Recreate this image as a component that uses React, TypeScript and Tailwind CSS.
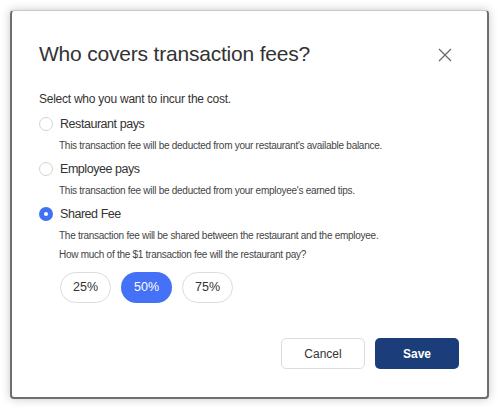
import { useState } from "react";

const options = [
  {
    id: "restaurant",
    label: "Restaurant pays",
    description: "This transaction fee will be deducted from your restaurant's available balance.",
  },
  {
    id: "employee",
    label: "Employee pays",
    description: "This transaction fee will be deducted from your employee's earned tips.",
  },
  {
    id: "shared",
    label: "Shared Fee",
    description: "The transaction fee will be shared between the restaurant and the employee.",
  },
];

const shares = ["25%", "50%", "75%"];

const Radio = ({ checked }: { checked: boolean }) =>
  checked ? (
    <span className="w-[14px] h-[14px] rounded-full bg-[#3f72f2] flex items-center justify-center shrink-0">
      <span className="w-[4px] h-[4px] rounded-full bg-white" />
    </span>
  ) : (
    <span className="w-[14px] h-[14px] rounded-full border border-[#d4d4d4] bg-white shrink-0" />
  );

const App = () => {
  const [selected, setSelected] = useState("shared");
  const [share, setShare] = useState("50%");

  return (
    <div
      className="w-[500px] h-[410px] bg-white pt-[10px] pl-[10px]"
      style={{ fontFamily: '"Liberation Sans", Arial, sans-serif' }}
    >
      <div className="w-[479px] h-[389px] bg-white rounded-[4px] border-t border-t-[#c8c8c8] border-x-2 border-b-2 border-x-[#6e6e6e] border-b-[#6e6e6e] shadow-[0_0_10px_rgba(0,0,0,0.22)] flex flex-col pl-[27px] pr-[27px] pt-[31px]">
        <div className="flex items-start justify-between">
          <h1 className="text-[21px] leading-[24px] tracking-[-0.2px] text-[#333]">Who covers transaction fees?</h1>
          <button className="mt-[6px] mr-[8px] text-[#666]" aria-label="Close">
            <svg width="14" height="14" viewBox="0 0 14 14" fill="none" stroke="currentColor" strokeWidth="1.2">
              <path d="M1 1L13 13M13 1L1 13" />
            </svg>
          </button>
        </div>

        <p className="mt-[25px] text-[12px] leading-[16px] tracking-[-0.25px] text-[#333]">
          Select who you want to incur the cost.
        </p>

        <div className="mt-[7px] flex flex-col gap-[5px]">
          {options.map((o) => (
            <div key={o.id} className="flex flex-col gap-[4px]">
              <label className="flex items-center gap-[7px] h-[20px] cursor-pointer" onClick={() => setSelected(o.id)}>
                <Radio checked={selected === o.id} />
                <span className="text-[12.5px] tracking-[-0.45px] text-[#333]">{o.label}</span>
              </label>
              <p className="pl-[20px] text-[10px] leading-[16px] tracking-[-0.27px] text-[#444]">{o.description}</p>
            </div>
          ))}
        </div>

        <p className="mt-[3px] pl-[20px] text-[10px] leading-[16px] tracking-[-0.27px] text-[#444]">
          How much of the $1 transaction fee will the restaurant pay?
        </p>

        <div className="mt-[9px] pl-[21px] flex gap-[10px]">
          {shares.map((s) => (
            <button
              key={s}
              onClick={() => setShare(s)}
              className={
                share === s
                  ? "w-[51px] h-[31px] rounded-full bg-[#4471f5] text-white text-[12.5px]"
                  : "w-[51px] h-[31px] rounded-full border border-[#dcdcdc] bg-white text-[#333] text-[12.5px]"
              }
            >
              {s}
            </button>
          ))}
        </div>

        <div className="mt-[35px] flex justify-end gap-[10px] pr-[1px]">
          <button className="w-[84px] h-[31px] rounded-[5px] border border-[#dcdcdc] bg-white text-[12px] text-[#333]">
            Cancel
          </button>
          <button className="w-[84px] h-[31px] rounded-[5px] bg-[#1b3d79] text-[12px] font-bold text-white">
            Save
          </button>
        </div>
      </div>
    </div>
  );
};

export default App;
